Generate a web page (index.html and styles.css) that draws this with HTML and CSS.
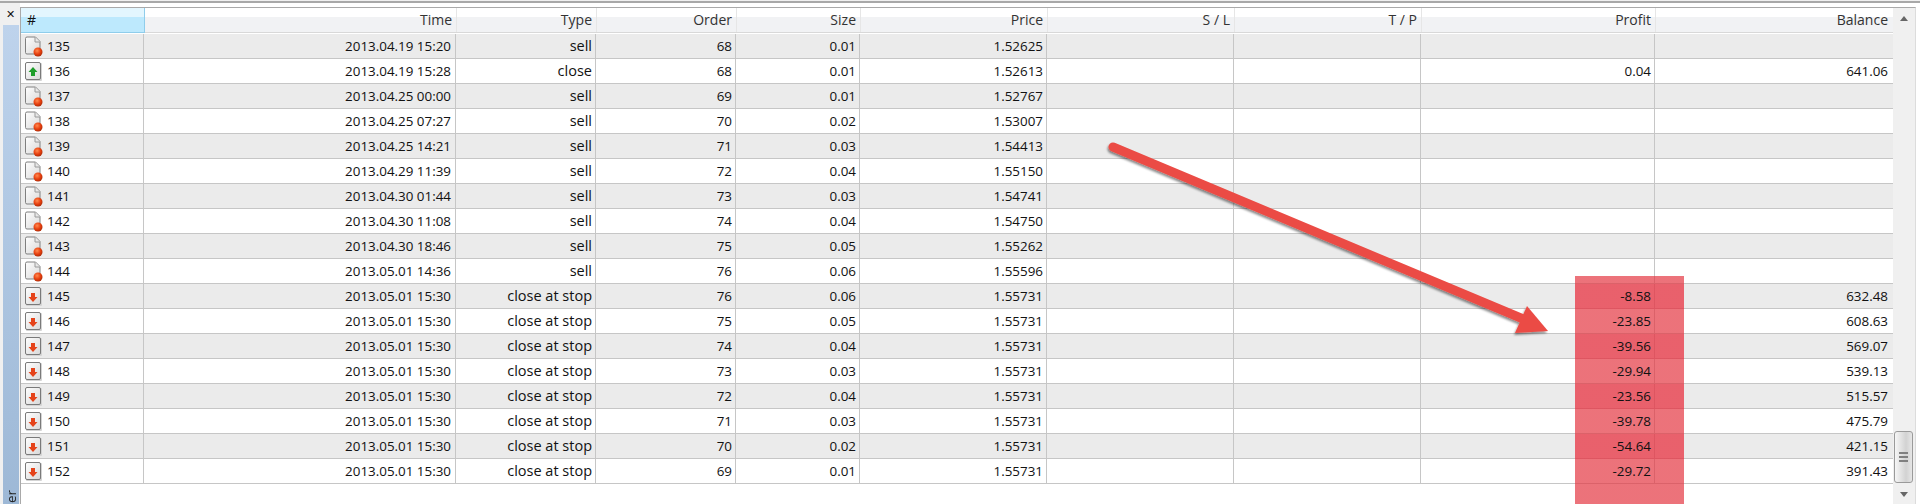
FILE: index.html
```html
<!DOCTYPE html>
<html lang="en">
<head>
<meta charset="utf-8">
<title>Trade history</title>
<link rel="stylesheet" href="styles.css">
</head>
<body>
<svg class="defs" width="0" height="0" aria-hidden="true">
<defs>
<radialGradient id="ball" cx="40%" cy="35%" r="70%"><stop offset="0" stop-color="#ff8a50"/><stop offset=".55" stop-color="#e8400f"/><stop offset="1" stop-color="#a82a08"/></radialGradient>
<linearGradient id="page" x1="0" y1="0" x2="1" y2="1"><stop offset="0" stop-color="#fff"/><stop offset="1" stop-color="#d8d8d8"/></linearGradient>
<symbol id="i-sell" viewBox="0 0 20 21"><path d="M1.500 2.500q0-1.500 1.500-1.500h8.500l4.500 4.500v11q0 1.500-1.500 1.500h-11.500q-1.500 0-1.500-1.500z" fill="url(#page)" stroke="#808080"/><path d="M11 1v5h5" fill="#e8e8e8" stroke="#9a9a9a"/><circle cx="14" cy="16" r="4.500" fill="url(#ball)"/></symbol>
<symbol id="i-up" viewBox="0 0 20 21"><rect x="2" y="2" width="16" height="18" rx="1" fill="#d4d4d4"/><rect x="1.500" y="1.500" width="15" height="17" rx="1.500" fill="url(#page)" stroke="#7a7a7a"/><path d="M9 6l4.500 5h-2.500v4h-4v-4h-2.500z" fill="#1f9d2b"/></symbol>
<symbol id="i-down" viewBox="0 0 20 21"><rect x="2" y="2" width="16" height="18" rx="1" fill="#d4d4d4"/><rect x="1.500" y="1.500" width="15" height="17" rx="1.500" fill="url(#page)" stroke="#7a7a7a"/><path d="M9 16l4.500-5h-2.500v-4h-4v4h-2.500z" fill="#e5431a"/></symbol>
</defs>
</svg>
<div class="window">
  <div class="topline"></div>
  <div class="content">
    <aside class="side">
      <div class="close">✕</div>
      <div class="tab"><span class="tab-label">er</span></div>
    </aside>
    <div class="main">
      <main class="table">
        <div class="row head">
          <div class="c sorted">#</div><div class="c">Time</div><div class="c">Type</div><div class="c">Order</div><div class="c">Size</div><div class="c">Price</div><div class="c">S / L</div><div class="c">T / P</div><div class="c">Profit</div><div class="c">Balance</div>
        </div>
        <div class="row alt"><div class="c id"><svg class="ico"><use href="#i-sell"/></svg>135</div><div class="c">2013.04.19 15:20</div><div class="c">sell</div><div class="c">68</div><div class="c">0.01</div><div class="c">1.52625</div><div class="c"></div><div class="c"></div><div class="c"></div><div class="c"></div></div>
        <div class="row"><div class="c id"><svg class="ico"><use href="#i-up"/></svg>136</div><div class="c">2013.04.19 15:28</div><div class="c">close</div><div class="c">68</div><div class="c">0.01</div><div class="c">1.52613</div><div class="c"></div><div class="c"></div><div class="c">0.04</div><div class="c">641.06</div></div>
        <div class="row alt"><div class="c id"><svg class="ico"><use href="#i-sell"/></svg>137</div><div class="c">2013.04.25 00:00</div><div class="c">sell</div><div class="c">69</div><div class="c">0.01</div><div class="c">1.52767</div><div class="c"></div><div class="c"></div><div class="c"></div><div class="c"></div></div>
        <div class="row"><div class="c id"><svg class="ico"><use href="#i-sell"/></svg>138</div><div class="c">2013.04.25 07:27</div><div class="c">sell</div><div class="c">70</div><div class="c">0.02</div><div class="c">1.53007</div><div class="c"></div><div class="c"></div><div class="c"></div><div class="c"></div></div>
        <div class="row alt"><div class="c id"><svg class="ico"><use href="#i-sell"/></svg>139</div><div class="c">2013.04.25 14:21</div><div class="c">sell</div><div class="c">71</div><div class="c">0.03</div><div class="c">1.54413</div><div class="c"></div><div class="c"></div><div class="c"></div><div class="c"></div></div>
        <div class="row"><div class="c id"><svg class="ico"><use href="#i-sell"/></svg>140</div><div class="c">2013.04.29 11:39</div><div class="c">sell</div><div class="c">72</div><div class="c">0.04</div><div class="c">1.55150</div><div class="c"></div><div class="c"></div><div class="c"></div><div class="c"></div></div>
        <div class="row alt"><div class="c id"><svg class="ico"><use href="#i-sell"/></svg>141</div><div class="c">2013.04.30 01:44</div><div class="c">sell</div><div class="c">73</div><div class="c">0.03</div><div class="c">1.54741</div><div class="c"></div><div class="c"></div><div class="c"></div><div class="c"></div></div>
        <div class="row"><div class="c id"><svg class="ico"><use href="#i-sell"/></svg>142</div><div class="c">2013.04.30 11:08</div><div class="c">sell</div><div class="c">74</div><div class="c">0.04</div><div class="c">1.54750</div><div class="c"></div><div class="c"></div><div class="c"></div><div class="c"></div></div>
        <div class="row alt"><div class="c id"><svg class="ico"><use href="#i-sell"/></svg>143</div><div class="c">2013.04.30 18:46</div><div class="c">sell</div><div class="c">75</div><div class="c">0.05</div><div class="c">1.55262</div><div class="c"></div><div class="c"></div><div class="c"></div><div class="c"></div></div>
        <div class="row"><div class="c id"><svg class="ico"><use href="#i-sell"/></svg>144</div><div class="c">2013.05.01 14:36</div><div class="c">sell</div><div class="c">76</div><div class="c">0.06</div><div class="c">1.55596</div><div class="c"></div><div class="c"></div><div class="c"></div><div class="c"></div></div>
        <div class="row alt"><div class="c id"><svg class="ico"><use href="#i-down"/></svg>145</div><div class="c">2013.05.01 15:30</div><div class="c">close at stop</div><div class="c">76</div><div class="c">0.06</div><div class="c">1.55731</div><div class="c"></div><div class="c"></div><div class="c"><span class="over">-8.58</span></div><div class="c">632.48</div></div>
        <div class="row"><div class="c id"><svg class="ico"><use href="#i-down"/></svg>146</div><div class="c">2013.05.01 15:30</div><div class="c">close at stop</div><div class="c">75</div><div class="c">0.05</div><div class="c">1.55731</div><div class="c"></div><div class="c"></div><div class="c"><span class="over">-23.85</span></div><div class="c">608.63</div></div>
        <div class="row alt"><div class="c id"><svg class="ico"><use href="#i-down"/></svg>147</div><div class="c">2013.05.01 15:30</div><div class="c">close at stop</div><div class="c">74</div><div class="c">0.04</div><div class="c">1.55731</div><div class="c"></div><div class="c"></div><div class="c"><span class="over">-39.56</span></div><div class="c">569.07</div></div>
        <div class="row"><div class="c id"><svg class="ico"><use href="#i-down"/></svg>148</div><div class="c">2013.05.01 15:30</div><div class="c">close at stop</div><div class="c">73</div><div class="c">0.03</div><div class="c">1.55731</div><div class="c"></div><div class="c"></div><div class="c"><span class="over">-29.94</span></div><div class="c">539.13</div></div>
        <div class="row alt"><div class="c id"><svg class="ico"><use href="#i-down"/></svg>149</div><div class="c">2013.05.01 15:30</div><div class="c">close at stop</div><div class="c">72</div><div class="c">0.04</div><div class="c">1.55731</div><div class="c"></div><div class="c"></div><div class="c"><span class="over">-23.56</span></div><div class="c">515.57</div></div>
        <div class="row"><div class="c id"><svg class="ico"><use href="#i-down"/></svg>150</div><div class="c">2013.05.01 15:30</div><div class="c">close at stop</div><div class="c">71</div><div class="c">0.03</div><div class="c">1.55731</div><div class="c"></div><div class="c"></div><div class="c"><span class="over">-39.78</span></div><div class="c">475.79</div></div>
        <div class="row alt"><div class="c id"><svg class="ico"><use href="#i-down"/></svg>151</div><div class="c">2013.05.01 15:30</div><div class="c">close at stop</div><div class="c">70</div><div class="c">0.02</div><div class="c">1.55731</div><div class="c"></div><div class="c"></div><div class="c"><span class="over">-54.64</span></div><div class="c">421.15</div></div>
        <div class="row"><div class="c id"><svg class="ico"><use href="#i-down"/></svg>152</div><div class="c">2013.05.01 15:30</div><div class="c">close at stop</div><div class="c">69</div><div class="c">0.01</div><div class="c">1.55731</div><div class="c"></div><div class="c"></div><div class="c"><span class="over">-29.72</span></div><div class="c">391.43</div></div>
      </main>
      <div class="scroll">
        <div class="arrow up"></div>
        <div class="thumb"><span></span><span></span><span></span></div>
        <div class="arrow down"></div>
      </div>
    </div>
  </div>
  <div class="band"></div>
  <svg class="pointer" viewBox="0 0 1920 504" aria-hidden="true">
    <defs><filter id="sh" x="-5%" y="-5%" width="110%" height="120%"><feDropShadow dx="-1" dy="2" stdDeviation="1.200" flood-color="#000" flood-opacity=".45"/></filter></defs>
    <g filter="url(#sh)">
      <path d="M1113 147L1528 321" stroke="#eb4c45" stroke-width="9" stroke-linecap="round" fill="none"/>
      <path d="M1527 306L1548 331L1515 333Z" fill="#eb4c45"/>
    </g>
  </svg>
</div>
</body>
</html>
```
FILE: styles.css
```css
html, body { margin: 0; padding: 0; background: #fff; }
body { width: 1920px; height: 504px; overflow: hidden; font: 13.400px "Open Sans", "Noto Sans", sans-serif; color: #111; }
.defs { position: absolute; }
.window { position: relative; width: 1920px; height: 504px; padding-top: 1px; box-sizing: border-box; background: #f0f0f0; }
.topline { height: 2px; background: #a8a8a8; }
.content { display: flex; height: 501px; background: #fff; }
.side { display: flex; flex-direction: column; width: 20px; flex: none; background: #f0f0f0; }
.close { height: 22px; padding: 4px 0 0 6px; box-sizing: border-box; font: bold 11px/16px "DejaVu Sans", sans-serif; color: #111; }
.tab { flex: 1; display: flex; align-items: flex-end; margin: 0 1px 0 3px; background: linear-gradient(#bed3ec, #9db8d6); overflow: hidden; }
.tab-label { writing-mode: vertical-rl; transform: rotate(180deg); line-height: 16px; margin-bottom: 1px; color: #222; }
.main { display: flex; width: 1896px; flex: none; margin-top: 4px; box-sizing: border-box; border-top: 1px solid #a9a9a9; border-right: 1px solid #dcdcdc; }
.table { width: 1873px; flex: none; box-sizing: border-box; border-left: 1px solid #a9a9a9; background: #fff; }
.row { display: grid; grid-template-columns: 123px 312px 140px 140px 124px 187px 187px 187px 234px 1fr; height: 25px; box-sizing: border-box; border-bottom: 1px solid #c6c6c6; }
.row.head { grid-template-columns: 124px 312px 140px 140px 124px 187px 187px 187px 234px 1fr; height: 26px; background: linear-gradient(#fff 0 9px, #f1f2f4 9px 24px, #d8d8d8 24px 25px, #fff 25px); border-bottom: 0; }
.row.alt { background: #ebebeb; }
.c { box-sizing: border-box; padding-right: 3px; text-align: right; line-height: 24px; border-right: 1px solid #c6c6c6; white-space: nowrap; }
.c:nth-child(2) { padding-right: 4px; }
.c:nth-child(3) { font-size: 14.500px; }
.c:last-child { border-right: 0; padding-right: 5px; }
.head .c { height: 24px; padding-right: 4px; border-right-color: #e6e6e6; color: #333; font-size: 14px; }
.head .c:last-child { padding-right: 5px; }
.head .sorted { text-align: left; padding-left: 6px; background: linear-gradient(#e3f6fe 0 9px, #bde9fd 9px); border-right: 1px solid #8fcdeb; color: #111; height: 25px; border-bottom: 1px solid #8fcdeb; }
.id { display: flex; align-items: center; gap: 3px; text-align: left; padding-left: 3px; }
.ico { width: 20px; height: 21px; flex: none; }
.over { position: relative; z-index: 2; color: #111; }
.scroll { flex: 1; display: flex; flex-direction: column; align-items: center; padding: 8px 1px 7px 0; background: #f0f0f0; }
.arrow { flex: none; width: 0; height: 0; border-left: 4.500px solid transparent; border-right: 4.500px solid transparent; }
.arrow.up { border-bottom: 5px solid #666; }
.arrow.down { margin-top: 9px; border-top: 5px solid #666; }
.thumb { flex: none; margin-top: auto; width: 19px; height: 52px; box-sizing: border-box; border: 1px solid #9a9a9a; border-radius: 3px; background: linear-gradient(90deg, #f6f6f6, #d2d2d2 65%, #e6e6e6); display: flex; flex-direction: column; align-items: center; justify-content: center; gap: 2px; }
.thumb span { display: block; width: 9px; height: 2px; background: #808080; }
.band { position: absolute; z-index: 1; left: 1575px; top: 276px; width: 109px; height: 228px; pointer-events: none;
  background: linear-gradient(
    rgba(228,55,66,.7) 0 8px, rgba(232,38,54,.7) 8px 33px,
    rgba(228,55,66,.7) 33px 58px, rgba(232,38,54,.7) 58px 83px,
    rgba(228,55,66,.7) 83px 108px, rgba(232,38,54,.7) 108px 133px,
    rgba(228,55,66,.7) 133px 158px, rgba(232,38,54,.7) 158px 183px,
    rgba(228,55,66,.7) 183px 228px); }
.pointer { position: absolute; z-index: 3; left: 0; top: 0; width: 1920px; height: 504px; pointer-events: none; }
```
